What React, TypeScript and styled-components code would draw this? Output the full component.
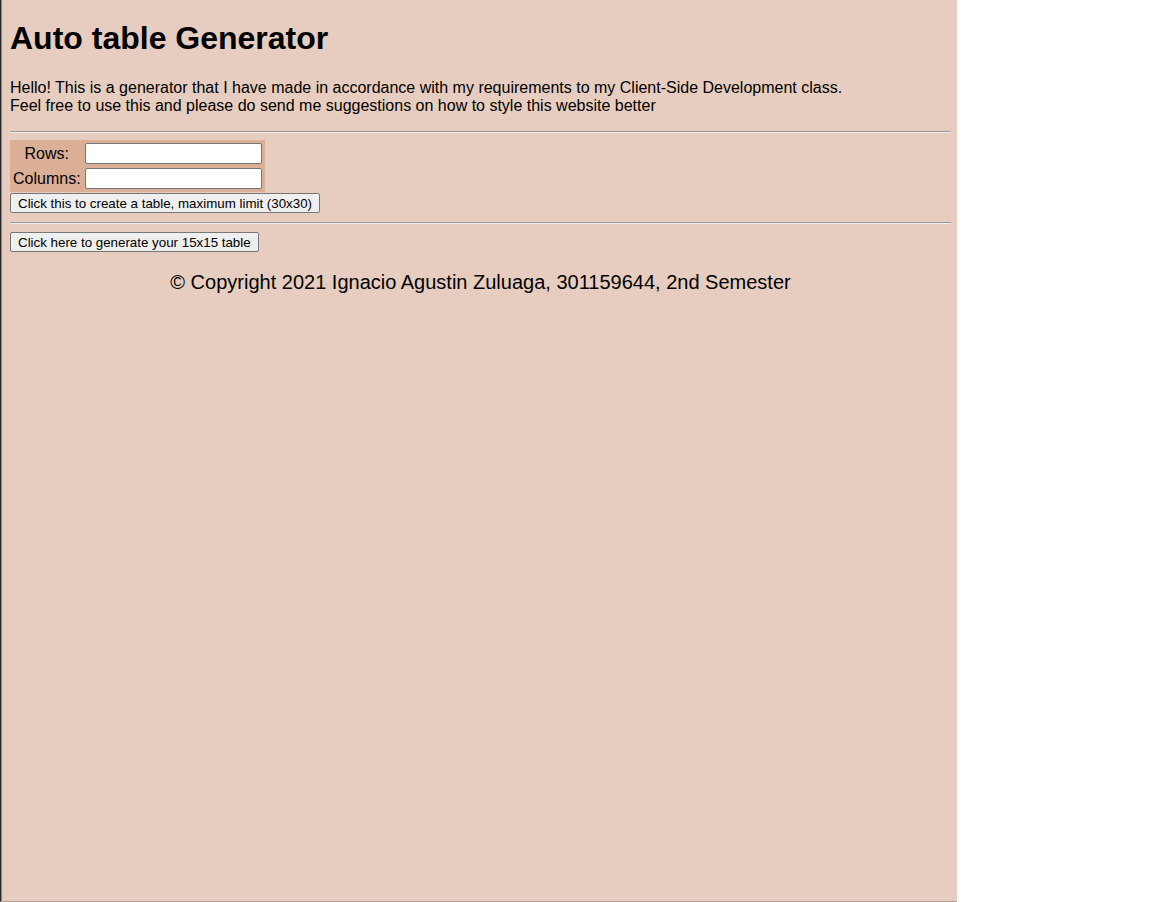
import React from "react";
import styled, { createGlobalStyle } from "styled-components";

const Global = createGlobalStyle`
  html, body { margin: 0; padding: 0; background: #ffffff; }
  body { font-family: "Liberation Sans", Arial, sans-serif; color: #000; }
`;

const Page = styled.div`
  box-sizing: border-box;
  width: 957px;
  height: 902px;
  background: #e7cdbf;
  border-left: 1px solid #2b2b2b;
  box-shadow: inset 1px 0 0 #8c7f7a;
  border-bottom: 1px solid #b39f98;
  padding: 0 6px 0 9px;
  display: flow-root;
  font-size: 16px;
`;

const Title = styled.h1`
  font-size: 32px;
  font-weight: bold;
  margin: 20px 0 22px;
  line-height: 37px;
`;

const Intro = styled.p`
  margin: 0;
  line-height: 18px;
`;

const Rule = styled.hr<{ $top: number; $bottom: number }>`
  margin: ${(p) => `${p.$top}px 0 ${p.$bottom}px`};
  border: 0;
  border-top: 1px solid #9a9a9a;
  border-bottom: 1px solid #eeeeee;
  height: 0;
`;

const FormTable = styled.table`
  background: #dbae96;
  border-spacing: 2px;
  font-size: 16px;
`;

const LabelCell = styled.td`
  padding: 1px;
  text-align: center;
  white-space: nowrap;
`;

const InputCell = styled.td`
  padding: 1px;
`;

const TextInput = styled.input`
  box-sizing: border-box;
  width: 177px;
  height: 21px;
  margin: 0;
  border: 1px solid #767676;
  border-radius: 2px;
  background: #fff;
  display: block;
`;

const Button = styled.button<{ $gap?: number }>`
  font-family: "Liberation Sans", Arial, sans-serif;
  font-size: 13.333px;
  padding: 1px 7px;
  height: 20px;
  line-height: 15px;
  border: 1px solid #767676;
  border-radius: 2px;
  background: #efefef;
  color: #000;
  margin: ${(p) => p.$gap ?? 0}px 0 0;
  display: block;
`;

const Footer = styled.p`
  text-align: center;
  font-size: 20px;
  margin: 18px 0 0;
  line-height: 24px;
`;

export default function App() {
  return (
    <>
      <Global />
      <Page>
        <Title>Auto table Generator</Title>
        <Intro>
          Hello! This is a generator that I have made in accordance with my requirements to my Client-Side Development class.
          <br />
          Feel free to use this and please do send me suggestions on how to style this website better
        </Intro>
        <Rule $top={16} $bottom={7} />
        <FormTable>
          <tbody>
            <tr>
              <LabelCell>Rows:</LabelCell>
              <InputCell>
                <TextInput type="text" />
              </InputCell>
            </tr>
            <tr>
              <LabelCell>Columns:</LabelCell>
              <InputCell>
                <TextInput type="text" />
              </InputCell>
            </tr>
          </tbody>
        </FormTable>
        <Button $gap={1}>Click this to create a table, maximum limit (30x30)</Button>
        <Rule $top={9} $bottom={8} />
        <Button>Click here to generate your 15x15 table</Button>
        <Footer>© Copyright 2021 Ignacio Agustin Zuluaga, 301159644, 2nd Semester</Footer>
      </Page>
    </>
  );
}
